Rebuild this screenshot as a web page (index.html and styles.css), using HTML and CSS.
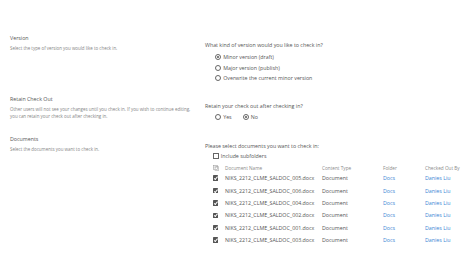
FILE: index.html
```html
<!DOCTYPE html>
<html>
<head>
<meta charset="utf-8">
<link rel="stylesheet" href="styles.css">
</head>
<body>
<div class="page">
  <section class="sec sec-version">
    <div class="left">
      <div class="label">Version</div>
      <div class="desc">Select the type of version you would like to check in.</div>
    </div>
    <div class="right">
      <div class="question">What kind of version would you like to check in?</div>
      <div class="radios">
        <div class="radio"><span class="circle on"></span>Minor version (draft)</div>
        <div class="radio"><span class="circle"></span>Major version (publish)</div>
        <div class="radio"><span class="circle"></span>Overwrite the current minor version</div>
      </div>
    </div>
  </section>
  <section class="sec sec-retain">
    <div class="left">
      <div class="label">Retain Check Out</div>
      <div class="desc">Other users will not see your changes until you check in. If you wish to continue editing,<br>you can retain your check out after checking in.</div>
    </div>
    <div class="right">
      <div class="question">Retain your check out after checking in?</div>
      <div class="inline-radios">
        <div class="radio"><span class="circle"></span>Yes</div>
        <div class="radio"><span class="circle on"></span>No</div>
      </div>
    </div>
  </section>
  <section class="sec sec-docs">
    <div class="left">
      <div class="label">Documents</div>
      <div class="desc">Select the documents you want to check in.</div>
    </div>
    <div class="right">
      <div class="question">Please select documents you want to check in:</div>
      <div class="subfolders"><span class="box"></span>Include subfolders</div>
      <table class="docs">
        <thead>
          <tr>
            <th class="c-check"><svg class="allicon" viewBox="0 0 8 8" width="6" height="6"><rect x="0.5" y="0.5" width="5.5" height="5.5" fill="none" stroke="#a0a0a0" stroke-width="0.8"/><path d="M2 2.2 L7.5 2.2 L7.5 7.5 L2.2 7.5" fill="none" stroke="#a0a0a0" stroke-width="0.8"/><path d="M1.6 3.3 L2.8 4.5 L4.9 2" fill="none" stroke="#808080" stroke-width="0.8"/></svg></th>
            <th class="c-name">Document Name</th>
            <th class="c-type">Content Type</th>
            <th class="c-folder">Folder</th>
            <th class="c-by">Checked Out By</th>
          </tr>
        </thead>
        <tbody>
          <tr><td class="c-check"><span class="cb"></span></td><td class="c-name">NIKS_2212_CLME_SALDOC_005.docx</td><td class="c-type">Document</td><td class="c-folder"><a>Docs</a></td><td class="c-by"><a>Danies Liu</a></td></tr>
          <tr><td class="c-check"><span class="cb"></span></td><td class="c-name">NIKS_2212_CLME_SALDOC_006.docx</td><td class="c-type">Document</td><td class="c-folder"><a>Docs</a></td><td class="c-by"><a>Danies Liu</a></td></tr>
          <tr><td class="c-check"><span class="cb"></span></td><td class="c-name">NIKS_2212_CLME_SALDOC_004.docx</td><td class="c-type">Document</td><td class="c-folder"><a>Docs</a></td><td class="c-by"><a>Danies Liu</a></td></tr>
          <tr><td class="c-check"><span class="cb"></span></td><td class="c-name">NIKS_2212_CLME_SALDOC_002.docx</td><td class="c-type">Document</td><td class="c-folder"><a>Docs</a></td><td class="c-by"><a>Danies Liu</a></td></tr>
          <tr><td class="c-check"><span class="cb"></span></td><td class="c-name">NIKS_2212_CLME_SALDOC_001.docx</td><td class="c-type">Document</td><td class="c-folder"><a>Docs</a></td><td class="c-by"><a>Danies Liu</a></td></tr>
          <tr><td class="c-check"><span class="cb"></span></td><td class="c-name">NIKS_2212_CLME_SALDOC_003.docx</td><td class="c-type">Document</td><td class="c-folder"><a>Docs</a></td><td class="c-by"><a>Danies Liu</a></td></tr>
        </tbody>
      </table>
    </div>
  </section>
</div>
</body>
</html>
```
FILE: styles.css
```css
html, body {
  margin: 0;
  padding: 0;
  background: #ffffff;
}
body {
  font-family: "Open Sans", "Noto Sans", sans-serif;
  color: #555555;
  width: 474px;
  height: 266px;
  overflow: hidden;
}
.page {
  padding-top: 34px;
}
.sec {
  display: flex;
}
.sec-version { height: 61px; }
.sec-retain { height: 40px; }
.left {
  width: 205px;
  padding-left: 10px;
  box-sizing: border-box;
  flex: none;
}
.right {
  flex: 1;
  padding-top: 7px;
}
.label {
  font-size: 5.3px;
  line-height: 8px;
  color: #555555;
}
.desc {
  font-size: 4.45px;
  line-height: 7px;
  color: #858585;
  margin-top: 3px;
  white-space: nowrap;
}
.question {
  font-size: 5.3px;
  line-height: 8px;
  color: #555555;
}
.radios {
  margin-top: 3px;
  padding-left: 10px;
}
.radio {
  display: flex;
  align-items: center;
  font-size: 5.3px;
  line-height: 10.5px;
  height: 10.5px;
  color: #555555;
}
.circle {
  width: 4.2px;
  height: 4.2px;
  border: 0.6px solid #666666;
  border-radius: 50%;
  margin-right: 2px;
  position: relative;
  flex: none;
}
.circle.on::after {
  content: "";
  position: absolute;
  left: 1px;
  top: 1px;
  width: 2.2px;
  height: 2.2px;
  border-radius: 50%;
  background: #555555;
}
.inline-radios {
  display: flex;
  gap: 11px;
  margin-top: 2px;
  padding-left: 10px;
}
.subfolders {
  display: flex;
  align-items: center;
  padding-left: 8px;
  font-size: 5.3px;
  height: 10px;
  color: #555555;
  margin-top: 1px;
}
.box {
  width: 4.2px;
  height: 4.2px;
  border: 0.6px solid #666666;
  margin-right: 1.6px;
  flex: none;
}
.docs {
  border-collapse: collapse;
  margin-left: 8px;
  margin-top: 2px;
}
.docs th {
  font-weight: normal;
  font-size: 4.7px;
  color: #8a8a8a;
  text-align: left;
  height: 9px;
  padding: 0;
}
.docs td {
  font-size: 5.3px;
  color: #555555;
  height: 12.35px;
  padding: 0;
}
.c-check { width: 12px; }
.c-name { width: 97px; }
.c-type { width: 61px; }
.c-folder { width: 42px; }
.docs a {
  color: #3b86d4;
}
.cb {
  display: block;
  width: 5.4px;
  height: 5.4px;
  background: #555555;
  border-radius: 0.6px;
  position: relative;
}
.cb::after {
  content: "";
  position: absolute;
  left: 1.8px;
  top: 0.7px;
  width: 1.3px;
  height: 2.5px;
  border-right: 0.8px solid #ffffff;
  border-bottom: 0.8px solid #ffffff;
  transform: rotate(40deg);
}
.allicon {
  display: block;
}
```
